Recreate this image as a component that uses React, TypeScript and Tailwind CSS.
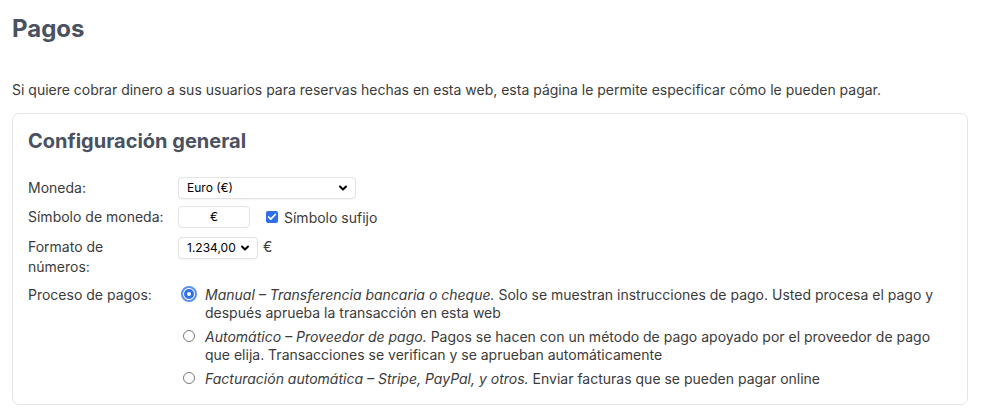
import { Check, ChevronDown } from 'lucide-react';

const font = { fontFamily: 'Inter, "Liberation Sans", sans-serif' };

function Select({ value, width }: { value: string; width: string }) {
  return (
    <div className={`flex h-[22px] ${width} items-center justify-between rounded-[4px] border border-[#e3e3e3] bg-white pl-[8px] pr-[6px] text-[12px] text-black shadow-[0_1px_1px_rgba(0,0,0,0.04)]`}>
      <span>{value}</span>
      <ChevronDown className="h-[12px] w-[12px]" strokeWidth={4} />
    </div>
  );
}

function Radio({ checked }: { checked?: boolean }) {
  if (checked) {
    return (
      <span className="flex h-[16px] w-[16px] flex-shrink-0 items-center justify-center rounded-full border-[2px] border-[#5b8ff0] bg-white">
        <span className="flex h-[10px] w-[10px] items-center justify-center rounded-full bg-[#2f6fe8]">
          <span className="h-[4px] w-[4px] rounded-full bg-white" />
        </span>
      </span>
    );
  }
  return (
    <span className="ml-[2px] mr-[2px] mt-[2px] h-[12px] w-[12px] flex-shrink-0 rounded-full border border-[#7a7a7a] bg-white" />
  );
}

export default function App() {
  const options = [
    {
      title: 'Manual – Transferencia bancaria o cheque.',
      text: ' Solo se muestran instrucciones de pago. Usted procesa el pago y después aprueba la transacción en esta web',
      checked: true,
    },
    {
      title: 'Automático – Proveedor de pago.',
      text: ' Pagos se hacen con un método de pago apoyado por el proveedor de pago que elija. Transacciones se verifican y se aprueban automáticamente',
    },
    {
      title: 'Facturación automática – Stripe, PayPal, y otros.',
      text: ' Enviar facturas que se pueden pagar online',
    },
  ];

  return (
    <div className="min-h-[415px] bg-white px-[12px] pt-[14px] text-[14px] text-[#3b3b3b]" style={font}>
      <h1 className="text-[24px] font-bold leading-[30px] text-[#4a5160]">Pagos</h1>

      <p className="mt-[36px] leading-[20px]">
        Si quiere cobrar dinero a sus usuarios para reservas hechas en esta web, esta página le permite especificar cómo le pueden pagar.
      </p>

      <div className="mt-[13px] w-[956px] rounded-[7px] border border-[#e4e4e4] px-[15px] pb-[16px] pt-[14px]">
        <h2 className="text-[20px] font-bold leading-[26px] text-[#4a5160]">Configuración general</h2>

        <div className="mt-[23px] flex flex-col gap-[7px]">
          <div className="flex items-center">
            <div className="w-[150px] leading-[20px]">Moneda:</div>
            <Select value="Euro (€)" width="w-[178px]" />
          </div>

          <div className="flex items-center">
            <div className="w-[150px] leading-[20px]">Símbolo de moneda:</div>
            <div className="flex h-[22px] w-[72px] items-center justify-center rounded-[4px] border border-[#e3e3e3] text-[12px] text-black">€</div>
            <span className="ml-[16px] flex h-[12px] w-[12px] items-center justify-center rounded-[2px] bg-[#2f6fe8]">
              <Check className="h-[10px] w-[10px] text-white" strokeWidth={4} />
            </span>
            <span className="ml-[6px]">Símbolo sufijo</span>
          </div>

          <div className="mt-[2px] flex items-start">
            <div className="w-[150px] leading-[20px]">
              Formato de
              <br />
              números:
            </div>
            <Select value="1.234,00" width="w-[80px]" />
            <span className="ml-[5px] leading-[20px]">€</span>
          </div>

          <div className="mt-[2px] flex items-start">
            <div className="w-[150px] leading-[18px]">Proceso de pagos:</div>
            <div className="flex flex-1 flex-col gap-[6px]">
              {options.map((o) => (
                <div key={o.title} className="flex items-start gap-[8px] pl-[3px]">
                  <Radio checked={o.checked} />
                  <p className="leading-[18px]">
                    <i>{o.title}</i>
                    {o.text}
                  </p>
                </div>
              ))}
            </div>
          </div>
        </div>
      </div>
    </div>
  );
}
